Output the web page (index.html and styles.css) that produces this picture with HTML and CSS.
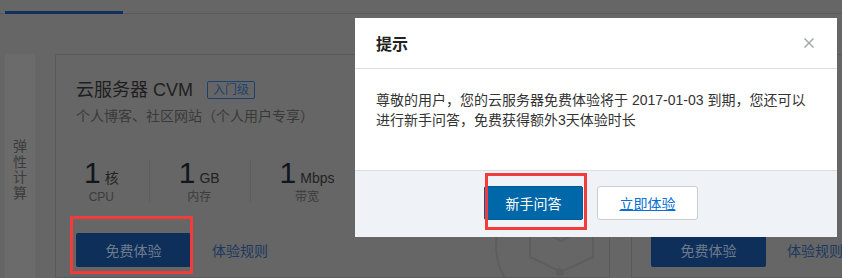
FILE: index.html
```html
<!DOCTYPE html>
<html lang="zh-CN">
<head>
<meta charset="utf-8">
<title>提示</title>
<link rel="stylesheet" href="styles.css">
</head>
<body>
<div class="page">
  <div class="tabs"><div class="tab-active"></div></div>
  <div class="main">
    <aside class="sidebar"><span class="side-label">弹<br>性<br>计<br>算</span></aside>
    <section class="card card-wide">
      <div class="card-body">
        <h2 class="card-title">云服务器 CVM<span class="badge">入门级</span></h2>
        <p class="card-sub">个人博客、社区网站（个人用户专享）</p>
        <div class="specs">
          <div class="spec"><div class="spec-val"><span class="num">1</span><span class="unit">核</span></div><div class="spec-label">CPU</div></div>
          <div class="spec"><div class="spec-val"><span class="num">1</span><span class="unit">GB</span></div><div class="spec-label">内存</div></div>
          <div class="spec"><div class="spec-val"><span class="num">1</span><span class="unit">Mbps</span></div><div class="spec-label">带宽</div></div>
        </div>
        <div class="actions">
          <button class="btn-trial">免费体验<span class="mark mark-a"></span></button>
          <a class="rule-link">体验规则</a>
        </div>
      </div>
      <div class="card-art">
        <svg width="116" height="230" viewBox="0 0 116 230">
          <circle cx="70" cy="190" r="65" fill="none" stroke="#5e5e5e" stroke-width="2"/>
          <path d="M39 90 V202 L70 217 L102 202 V90" fill="none" stroke="#5e5e5e" stroke-width="2"/>
          <path d="M57 179 L70 186 L83 179" fill="none" stroke="#5e5e5e" stroke-width="2"/>
          <circle cx="69" cy="217" r="4" fill="#5e5e5e"/>
        </svg>
      </div>
    </section>
    <section class="card card-right">
      <div class="card-body-r">
        <div class="card-top-space"></div>
        <div class="actions">
          <button class="btn-trial">免费体验</button>
          <a class="rule-link">体验规则</a>
        </div>
      </div>
    </section>
  </div>
</div>

<div class="modal">
  <div class="modal-head">
    <span class="modal-title">提示</span>
    <span class="modal-close">
      <svg width="10" height="10" viewBox="0 0 10 10"><path d="M0.5 0.5 L9.5 9.5 M9.5 0.5 L0.5 9.5" stroke="#9aa2aa" stroke-width="1.4" fill="none"/></svg>
    </span>
  </div>
  <div class="modal-body">尊敬的用户，您的云服务器免费体验将于 2017-01-03 到期，您还可以进行新手问答，免费获得额外3天体验时长</div>
  <div class="modal-foot">
    <button class="btn-primary">新手问答<span class="mark mark-b"></span></button>
    <button class="btn-ghost">立即体验</button>
  </div>
</div>
</body>
</html>
```

FILE: styles.css
```css
* {
  box-sizing: border-box;
  margin: 0;
  padding: 0;
}

html, body {
  width: 842px;
  height: 278px;
  overflow: hidden;
}

body {
  background: #666666;
  font-family: "Liberation Sans", "Noto Sans CJK SC", sans-serif;
  color: #222;
  position: relative;
}

.tabs {
  height: 14px;
  border-bottom: 1px solid #5b5b5b;
  padding-left: 5px;
  display: flex;
}

.tab-active {
  width: 118px;
  height: 14px;
  border-bottom: 3px solid #0f2f5e;
}

.main {
  display: flex;
  align-items: flex-start;
  gap: 20px;
  padding: 40px 0 0 5px;
}

.sidebar {
  flex: none;
  width: 30px;
  height: 224px;
  background: #6b6b6b;
  display: flex;
  justify-content: center;
  padding-top: 85px;
}

.side-label {
  font-size: 14px;
  line-height: 15.5px;
  width: 15px;
  text-align: center;
  color: #3c3c3c;
}

.card {
  flex: none;
  height: 224px;
  border: 1px solid #5a5a5a;
  display: flex;
}

.card-wide {
  width: 555px;
}

.card-right {
  width: 211px;
  margin-left: 1px;
  border-right: none;
}

.card-body {
  flex: none;
  width: 340px;
  padding: 23px 0 0 20px;
}

.card-body-r {
  flex: none;
  padding: 23px 0 0 19px;
}

.card-top-space {
  height: 124px;
}

.card-title {
  display: flex;
  align-items: center;
  font-size: 18px;
  font-weight: normal;
  line-height: 24px;
  color: #1f1f1f;
  white-space: nowrap;
}

.badge {
  margin-left: 14px;
  height: 18px;
  padding: 0 5px;
  border: 1px solid #1d416f;
  border-radius: 2px;
  font-size: 12px;
  line-height: 16px;
  color: #1d416f;
}

.card-sub {
  margin-top: 4px;
  font-size: 14px;
  line-height: 20px;
  color: #3a3a3a;
}

.specs {
  display: flex;
  margin-top: 33px;
}

.spec {
  height: 43px;
  padding: 0 30px 0 29px;
  border-left: 1px solid #5c5c5c;
  text-align: center;
}

.spec:first-child {
  padding-left: 8px;
  border-left: none;
}

.spec-val {
  height: 28px;
  line-height: 28px;
  white-space: nowrap;
  color: #222;
}

.num {
  font-size: 30px;
  color: #11161d;
}

.unit {
  margin-left: 4px;
  font-size: 14px;
  line-height: 14px;
}

.spec-label {
  margin-top: 3px;
  font-size: 12px;
  line-height: 14px;
  color: #3c3c3c;
}

.actions {
  display: flex;
  align-items: center;
  margin-top: 31px;
}

.btn-trial {
  position: relative;
  flex: none;
  width: 115px;
  height: 34px;
  border: none;
  border-radius: 2px;
  background: #0e2f5a;
  color: #6d7b8c;
  font-family: inherit;
  font-size: 14px;
}

.rule-link {
  margin-left: 21px;
  font-size: 14px;
  color: #1d3960;
  white-space: nowrap;
}

.card-art {
  flex: none;
  width: 116px;
  height: 222px;
  margin-left: 95px;
  overflow: hidden;
}

.card-art svg {
  display: block;
}

.mark {
  position: absolute;
  border: 3px solid #f23c3c;
  pointer-events: none;
}

.mark-a {
  left: -6px;
  top: -17px;
  width: 123px;
  height: 58px;
}

.mark-b {
  left: 0;
  top: -14px;
  width: 102px;
  height: 57px;
}

/* modal */
.modal {
  position: absolute;
  left: 355px;
  top: 18px;
  width: 482px;
  height: 219px;
  background: #fff;
  display: flex;
  flex-direction: column;
}

.modal-head {
  flex: none;
  height: 51px;
  border-bottom: 1px solid #dedede;
  display: flex;
  align-items: center;
  justify-content: space-between;
  padding: 0 23px 0 21px;
}

.modal-title {
  font-size: 16px;
  font-weight: bold;
  color: #222;
}

.modal-close {
  display: flex;
}

.modal-body {
  flex: none;
  height: 101px;
  padding: 21px 21px 0;
  font-size: 14px;
  line-height: 20px;
  color: #333;
}

.modal-foot {
  flex: 1;
  display: flex;
  align-items: flex-start;
  justify-content: center;
  gap: 14px;
  padding: 15px 10px 0 0;
  background: #eff3f7;
  border-top: 1px solid #d9dee4;
}

.btn-primary {
  position: relative;
  width: 99px;
  height: 34px;
  border: 1px solid #005a96;
  border-radius: 2px;
  background: #0067a8;
  color: #fff;
  font-family: inherit;
  font-size: 14px;
}

.btn-ghost {
  width: 101px;
  height: 34px;
  border: 1px solid #c9ced4;
  border-radius: 3px;
  background: #fff;
  color: #0a6fd0;
  text-decoration: underline;
  font-family: inherit;
  font-size: 14px;
}
```
